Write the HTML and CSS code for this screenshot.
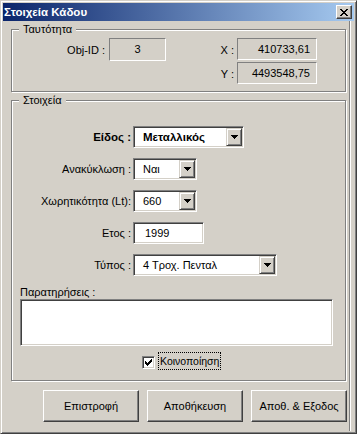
FILE: index.html
```html
<!DOCTYPE html>
<html>
<head>
<meta charset="utf-8">
<link rel="stylesheet" href="styles.css">
</head>
<body>
<div class="window">
  <div class="titlebar">
    <span class="title">Στοιχεία Κάδου</span>
    <span class="close">
      <svg width="8" height="7" viewBox="0 0 8 7" shape-rendering="crispEdges">
        <rect x="0" y="0" width="2" height="1"/><rect x="6" y="0" width="2" height="1"/>
        <rect x="1" y="1" width="2" height="1"/><rect x="5" y="1" width="2" height="1"/>
        <rect x="2" y="2" width="4" height="1"/>
        <rect x="3" y="3" width="2" height="1"/>
        <rect x="2" y="4" width="4" height="1"/>
        <rect x="1" y="5" width="2" height="1"/><rect x="5" y="5" width="2" height="1"/>
        <rect x="0" y="6" width="2" height="1"/><rect x="6" y="6" width="2" height="1"/>
      </svg>
    </span>
  </div>
  <div class="client">
    <div class="group g1">
      <div class="gtitle">Ταυτότητα</div>
      <div class="g1-body">
        <div class="objid">
          <span class="objlbl">Obj-ID :</span>
          <span class="static objbox">3</span>
        </div>
        <div class="xy">
          <div class="xyrow"><span class="xylbl">X :</span><span class="static num">410733,61</span></div>
          <div class="xyrow"><span class="xylbl">Y :</span><span class="static num">4493548,75</span></div>
        </div>
      </div>
    </div>

    <div class="group g2">
      <div class="gtitle">Στοιχεία</div>
      <div class="form">
        <div class="row">
          <span class="flbl bold">Είδος :</span>
          <div class="sunken combo w-eidos bold">
            <span class="ctext">Μεταλλικός</span>
            <span class="dd"><svg width="7" height="4" viewBox="0 0 7 4" shape-rendering="crispEdges"><path d="M0 0h7v1h-1v1h-1v1h-1v1h-1v-1h-1v-1h-1v-1h-1z"/></svg></span>
          </div>
        </div>
        <div class="row">
          <span class="flbl">Ανακύκλωση :</span>
          <div class="sunken combo w-short">
            <span class="ctext">Ναι</span>
            <span class="dd"><svg width="7" height="4" viewBox="0 0 7 4" shape-rendering="crispEdges"><path d="M0 0h7v1h-1v1h-1v1h-1v1h-1v-1h-1v-1h-1v-1h-1z"/></svg></span>
          </div>
        </div>
        <div class="row">
          <span class="flbl">Χωρητικότητα (Lt):</span>
          <div class="sunken combo w-short">
            <span class="ctext">660</span>
            <span class="dd"><svg width="7" height="4" viewBox="0 0 7 4" shape-rendering="crispEdges"><path d="M0 0h7v1h-1v1h-1v1h-1v1h-1v-1h-1v-1h-1v-1h-1z"/></svg></span>
          </div>
        </div>
        <div class="row">
          <span class="flbl">Ετος :</span>
          <div class="sunken combo w-year">
            <span class="ctext tb">1999</span>
          </div>
        </div>
        <div class="row">
          <span class="flbl">Τύπος :</span>
          <div class="sunken combo w-type">
            <span class="ctext">4 Τροχ. Πενταλ</span>
            <span class="dd"><svg width="7" height="4" viewBox="0 0 7 4" shape-rendering="crispEdges"><path d="M0 0h7v1h-1v1h-1v1h-1v1h-1v-1h-1v-1h-1v-1h-1z"/></svg></span>
          </div>
        </div>
      </div>
      <div class="notes-lbl">Παρατηρήσεις :</div>
      <div class="sunken notes"></div>
      <div class="chkrow">
        <span class="sunken chk">
          <svg width="7" height="7" viewBox="0 0 7 7" shape-rendering="crispEdges">
            <rect x="0" y="2" width="1" height="3"/><rect x="1" y="3" width="1" height="3"/>
            <rect x="2" y="4" width="1" height="3"/><rect x="3" y="3" width="1" height="3"/>
            <rect x="4" y="2" width="1" height="3"/><rect x="5" y="1" width="1" height="3"/>
            <rect x="6" y="0" width="1" height="3"/>
          </svg>
        </span>
        <span class="chklbl">Κοινοποίηση</span>
      </div>
    </div>

    <div class="buttons">
      <div class="btn">Επιστροφή</div>
      <div class="btn">Αποθήκευση</div>
      <div class="btn">Αποθ. &amp; Εξοδος</div>
    </div>
  </div>
</div>
</body>
</html>
```

FILE: styles.css
```css
html, body {
  margin: 0;
  padding: 0;
}
body {
  width: 357px;
  height: 434px;
  overflow: hidden;
  background: #D4D0C8;
  font-family: "Liberation Sans", Arial, sans-serif;
  font-size: 11px;
  color: #000;
}
.window {
  box-sizing: border-box;
  width: 357px;
  height: 434px;
  border: 1px solid;
  border-color: #D4D0C8 #404040 #404040 #D4D0C8;
  box-shadow: inset 1px 1px #fff, inset -1px -1px #808080;
  padding: 2px;
  background: #D4D0C8;
  display: flex;
  flex-direction: column;
}
.titlebar {
  height: 18px;
  flex: none;
  background: linear-gradient(to right, #0A246A, #A6CAF0);
  display: flex;
  align-items: center;
  justify-content: space-between;
  padding: 0 2px 0 1px;
}
.title {
  color: #fff;
  font-weight: bold;
  font-size: 11.5px;
  line-height: 18px;
}
.close {
  box-sizing: border-box;
  width: 16px;
  height: 14px;
  background: #D4D0C8;
  border: 1px solid;
  border-color: #fff #404040 #404040 #fff;
  box-shadow: inset -1px -1px #808080;
  display: flex;
  align-items: center;
  justify-content: center;
}
.close svg { display: block; margin-left: -1px; }

.client {
  flex: 1;
  display: flex;
  flex-direction: column;
  margin-right: 4px;
  border-right: 1px solid #808080;
  box-shadow: 1px 0 #fff;
}
.group {
  box-sizing: border-box;
  width: 335px;
  margin-left: 8px;
  margin-top: 8px;
  border: 1px solid #808080;
  box-shadow: inset 1px 1px #fff, 1px 1px #fff;
  flex: none;
}
.g1 { height: 63px; }
.g2 { height: 281px; }
.gtitle {
  margin: -7px 0 0 7px;
  padding: 0 4px;
  background: #D4D0C8;
  width: fit-content;
  height: 13px;
  line-height: 13px;
}

.g1-body {
  display: flex;
  margin-top: 2px;
}
.objid {
  display: flex;
  align-items: center;
  height: 23px;
}
.objlbl {
  width: 93px;
  margin-right: 4px;
  text-align: right;
}
.static {
  box-sizing: border-box;
  border: 1px solid;
  border-color: #808080 #fff #fff #808080;
  display: flex;
  align-items: center;
}
.objbox {
  width: 57px;
  height: 23px;
  justify-content: center;
  padding-bottom: 1px;
}
.xy {
  margin-left: 54px;
  display: flex;
  flex-direction: column;
  gap: 2px;
}
.xyrow {
  display: flex;
  align-items: center;
  height: 22px;
}
.xylbl {
  width: 14px;
  margin-right: 3px;
  text-align: right;
  padding-top: 2px;
}
.num {
  width: 80px;
  height: 22px;
  justify-content: flex-end;
  padding-right: 6px;
}

.form {
  margin-top: 19px;
  display: flex;
  flex-direction: column;
  gap: 10px;
}
.row {
  display: flex;
  align-items: center;
  height: 22px;
}
.flbl {
  width: 119px;
  margin-right: 2px;
  text-align: right;
  white-space: nowrap;
}
.bold { font-weight: bold; font-size: 11.5px; }
.sunken {
  box-sizing: border-box;
  background: #fff;
  border: 1px solid;
  border-color: #808080 #fff #fff #808080;
  box-shadow: inset 1px 1px #404040, inset -1px -1px #D4D0C8;
  padding: 1px;
}
.combo {
  height: 22px;
  display: flex;
  align-items: center;
}
.ctext {
  flex: 1;
  padding-left: 8px;
  white-space: nowrap;
  overflow: hidden;
}
.ctext.tb { padding-left: 10px; }
.dd {
  box-sizing: border-box;
  width: 16px;
  height: 18px;
  background: #D4D0C8;
  border: 1px solid;
  border-color: #D4D0C8 #404040 #404040 #D4D0C8;
  box-shadow: inset 1px 1px #fff, inset -1px -1px #808080;
  display: flex;
  align-items: center;
  justify-content: center;
}
.dd svg { display: block; }
.w-eidos { width: 111px; }
.w-short { width: 64px; }
.w-year { width: 71px; }
.w-type { width: 144px; }

.notes-lbl {
  margin: 10px 0 0 8px;
  line-height: 13px;
  height: 13px;
}
.notes {
  margin-left: 8px;
  width: 313px;
  height: 47px;
}
.chkrow {
  display: flex;
  margin-top: 6px;
  height: 18px;
}
.chk {
  width: 13px;
  height: 13px;
  margin: 4px 0 0 130px;
  display: flex;
  align-items: center;
  justify-content: center;
}
.chk svg { display: block; }
.chklbl {
  box-sizing: border-box;
  margin-left: 3px;
  height: 18px;
  border: 1px dotted #000;
  padding: 0 1px;
  font-size: 10.5px;
  display: flex;
  align-items: center;
}

.buttons {
  display: flex;
  gap: 8px;
  margin: 9px 0 0 40px;
}
.btn {
  box-sizing: border-box;
  width: 96px;
  height: 32px;
  border: 1px solid;
  border-color: #fff #404040 #404040 #fff;
  box-shadow: inset -1px -1px #808080;
  display: flex;
  align-items: center;
  justify-content: center;
}
```
